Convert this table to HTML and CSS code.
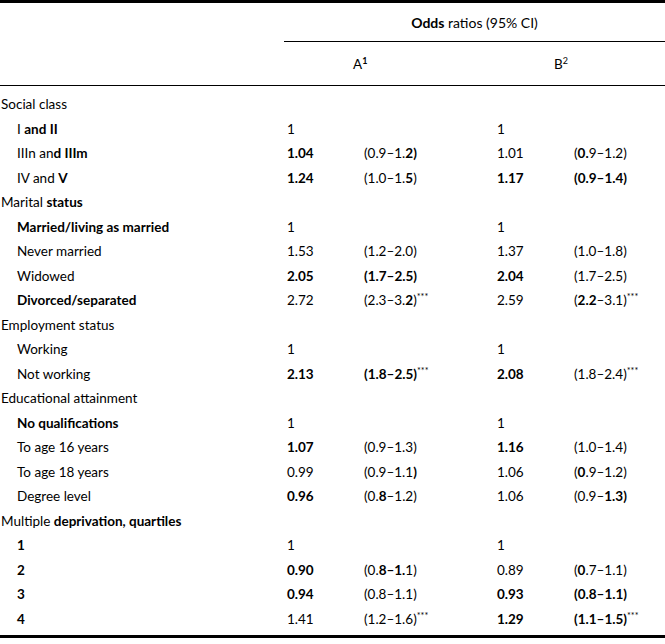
FILE: index.html
```html
<!DOCTYPE html>
<html lang="en">
<head>
<meta charset="utf-8">
<title>Odds ratios</title>
<link rel="stylesheet" href="styles.css">
</head>
<body>
<table class="or-table">
  <colgroup>
    <col class="c-label">
    <col class="c-or">
    <col class="c-ci">
    <col class="c-or">
    <col class="c-ci-last">
  </colgroup>
  <thead>
    <tr class="h1">
      <th></th>
      <th colspan="4" class="h-odds"><b>Odds</b> ratios (95% CI)</th>
    </tr>
    <tr class="h2">
      <th></th>
      <th colspan="2" class="h-a">A<sup>1</sup></th>
      <th colspan="2" class="h-b">B<sup>2</sup></th>
    </tr>
  </thead>
  <tbody>
    <tr class="sec first"><td>Social class</td><td></td><td></td><td></td><td></td></tr>
    <tr class="sub"><td>I <b>and II</b></td><td>1</td><td></td><td>1</td><td></td></tr>
    <tr class="sub"><td>IIIn an<b>d IIIm</b></td><td><b>1.04</b></td><td>(0.9–1.<b>2)</b></td><td>1.01</td><td>(<b>0.</b>9–1.2)</td></tr>
    <tr class="sub"><td>IV and <b>V</b></td><td><b>1.24</b></td><td>(1.0–1.<b>5</b>)</td><td><b>1.17</b></td><td><b>(0.9–1.4)</b></td></tr>
    <tr class="sec"><td>Marital <b>status</b></td><td></td><td></td><td></td><td></td></tr>
    <tr class="sub"><td><b>Married/living as married</b></td><td>1</td><td></td><td>1</td><td></td></tr>
    <tr class="sub"><td>Never married</td><td>1.53</td><td>(1.2–2.0)</td><td>1.37</td><td>(1.0–1.8)</td></tr>
    <tr class="sub"><td>Widowed</td><td><b>2.05</b></td><td><b>(1.7–2.5)</b></td><td><b>2.04</b></td><td>(1.7–2.5)</td></tr>
    <tr class="sub"><td><b>Divorced/separated</b></td><td>2.72</td><td>(2.3–3.<b>2</b>)<sup>***</sup></td><td>2.59</td><td>(<b>2.2</b>–3.1)<sup>***</sup></td></tr>
    <tr class="sec"><td>Employment status</td><td></td><td></td><td></td><td></td></tr>
    <tr class="sub"><td>Working</td><td>1</td><td></td><td>1</td><td></td></tr>
    <tr class="sub"><td>Not working</td><td><b>2.13</b></td><td><b>(1.8–2.5)</b><sup>***</sup></td><td><b>2.08</b></td><td>(1.8–2.4)<sup>***</sup></td></tr>
    <tr class="sec"><td>Educational attainment</td><td></td><td></td><td></td><td></td></tr>
    <tr class="sub"><td><b>No qualifications</b></td><td>1</td><td></td><td>1</td><td></td></tr>
    <tr class="sub"><td>To age 16 years</td><td><b>1.07</b></td><td>(0.9–1.3)</td><td><b>1.16</b></td><td>(1.0–1.4)</td></tr>
    <tr class="sub"><td>To age 18 years</td><td>0.99</td><td>(0.9–1.1<b>)</b></td><td>1.06</td><td>(<b>0</b>.9–1.2)</td></tr>
    <tr class="sub"><td>Degree level</td><td><b>0.96</b></td><td>(0.<b>8</b>–1.2)</td><td>1.06</td><td>(0.9–<b>1.3)</b></td></tr>
    <tr class="sec"><td>Multiple <b>deprivation, quartiles</b></td><td></td><td></td><td></td><td></td></tr>
    <tr class="sub"><td><b>1</b></td><td>1</td><td></td><td>1</td><td></td></tr>
    <tr class="sub"><td><b>2</b></td><td><b>0.90</b></td><td>(0.<b>8–1.</b>1)</td><td>0.89</td><td>(<b>0</b>.7–1.1)</td></tr>
    <tr class="sub"><td><b>3</b></td><td><b>0.94</b></td><td>(0.8–1.1)</td><td><b>0.93</b></td><td><b>(0.8–1.1)</b></td></tr>
    <tr class="sub last"><td><b>4</b></td><td>1.41</td><td>(1.2–1.6)<sup>***</sup></td><td><b>1.29</b></td><td><b>(1.1–1.5)</b><sup>***</sup></td></tr>
  </tbody>
</table>
</body>
</html>
```

FILE: styles.css
```css
html, body {
  margin: 0;
  padding: 0;
  background: #ffffff;
}

body {
  font-family: "Lato", "Noto Sans", sans-serif;
  font-size: 13.5px;
  color: #000000;
}

b {
  font-weight: 700;
}

.or-table {
  width: 665px;
  border-collapse: collapse;
  table-layout: fixed;
  border-top: 3px solid #000000;
  border-bottom: 3px solid #000000;
}

.c-label { width: 284px; }
.c-or { width: 80px; }
.c-ci { width: 130px; }
.c-ci-last { width: 91px; }

th, td {
  padding: 0;
  text-align: left;
  font-weight: 400;
  white-space: nowrap;
}

sup {
  font-size: 9px;
  line-height: 0;
  vertical-align: 5px;
}

.h1 th {
  height: 38px;
}

.h-odds {
  text-align: center;
  border-bottom: 1px solid #000000;
  font-size: 14px;
}

.h2 th {
  height: 43px;
  border-bottom: 1px solid #000000;
}

.h-a {
  text-align: left;
  padding-left: 69px;
}

.h-b {
  text-align: left;
  padding-left: 60px;
}

.h-a sup {
  font-weight: 700;
}

tbody td {
  height: 24.5px;
  vertical-align: middle;
}

tbody tr.first td {
  padding-top: 6px;
}

tbody tr.last td {
  padding-bottom: 4px;
}

.sec td:first-child {
  padding-left: 1px;
}

.sub td:first-child {
  padding-left: 17px;
}

tbody td:nth-child(2),
tbody td:nth-child(4) {
  padding-left: 3px;
}
```
